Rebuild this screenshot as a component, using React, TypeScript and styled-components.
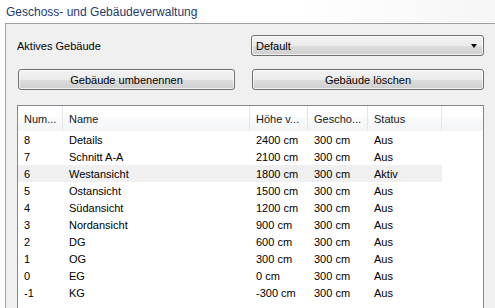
import React from 'react';
import styled, { createGlobalStyle } from 'styled-components';

const GlobalStyle = createGlobalStyle`
  html, body {
    margin: 0;
    padding: 0;
    background: #ffffff;
    overflow: hidden;
  }
  body {
    font-family: "Liberation Sans", Arial, sans-serif;
    font-size: 11px;
    color: #000000;
  }
`;

const Window = styled.div`
  width: 495px;
  height: 308px;
  overflow: hidden;
  display: flex;
  flex-direction: column;
  background: linear-gradient(90deg, #ffffff 0%, #ffffff 60%, #f6f6f6 100%);
`;

const TitleBar = styled.div`
  height: 23px;
  flex: none;
  display: flex;
  align-items: center;
  padding-left: 6px;
  font-size: 12px;
  color: #1e3a6e;
`;

// panel continues past the right and bottom edge of the frame
const Panel = styled.div`
  flex: 1;
  min-height: 0;
  margin-left: 5px;
  width: 510px;
  display: flex;
  background: #f0f0f0;
  border-top: 1px solid #a0a0a0;
  border-left: 1px solid #a0a0a0;
  padding: 11px 0 0 11px;
  box-sizing: border-box;
`;

const Content = styled.div`
  width: 467px;
  display: flex;
  flex-direction: column;
`;

const ControlGrid = styled.div`
  display: grid;
  grid-template-columns: 219px 1fr;
  column-gap: 15px;
  row-gap: 13px;
  align-items: center;
`;

const Label = styled.div`
  color: #000000;
`;

const winGradient = `linear-gradient(180deg, #f2f2f2 0%, #ebebeb 50%, #dddddd 51%, #cfcfcf 100%)`;

const Select = styled.div`
  height: 21px;
  box-sizing: border-box;
  border: 1px solid #707070;
  border-radius: 3px;
  background: ${winGradient};
  box-shadow: inset 0 0 0 1px rgba(255, 255, 255, 0.7);
  display: flex;
  align-items: center;
  justify-content: space-between;
  padding: 0 3px 0 4px;
`;

const Arrow = styled.span`
  width: 0;
  height: 0;
  border-left: 3.5px solid transparent;
  border-right: 3.5px solid transparent;
  border-top: 4px solid #000000;
  margin-right: 3px;
`;

const Button = styled.button<{ inset?: number }>`
  height: 21px;
  box-sizing: border-box;
  margin: 0 ${p => p.inset ?? 1}px 0 1px;
  border: 1px solid #707070;
  border-radius: 3px;
  background: ${winGradient};
  box-shadow: inset 0 0 0 1px rgba(255, 255, 255, 0.7);
  font-family: "Liberation Sans", Arial, sans-serif;
  font-size: 11px;
  color: #000000;
  padding: 0;
`;

const ListView = styled.div`
  margin-top: 15px;
  flex: 1;
  min-height: 0;
  background: #ffffff;
  border: 1px solid #828790;
  border-bottom: none;
  overflow: hidden;
`;

const HeaderRow = styled.div`
  display: grid;
  grid-template-columns: 45px 187px 58px 60px 74px 1fr;
  height: 25px;
  background: linear-gradient(180deg, #ffffff 0%, #ffffff 45%, #f9fafb 46%, #f4f5f7 100%);
`;

const HeaderCell = styled.div<{ last?: boolean }>`
  display: flex;
  align-items: center;
  padding-left: 6px;
  border-right: ${p => (p.last ? 'none' : '1px solid #e3e5e8')};
  color: #1a1a1a;
`;

const Row = styled.div<{ selected?: boolean }>`
  display: grid;
  grid-template-columns: 45px 187px 58px 60px 74px;
  width: 424px;
  height: 17px;
  align-items: center;
  background: ${p => (p.selected ? '#f0f0f0' : 'transparent')};
`;

const Cell = styled.div`
  padding-left: 6px;
  white-space: nowrap;
`;

const columns = ['Num...', 'Name', 'Höhe v...', 'Gescho...', 'Status'];

const floors = [
  { num: '8', name: 'Details', height: '2400 cm', storey: '300 cm', status: 'Aus' },
  { num: '7', name: 'Schnitt A-A', height: '2100 cm', storey: '300 cm', status: 'Aus' },
  { num: '6', name: 'Westansicht', height: '1800 cm', storey: '300 cm', status: 'Aktiv' },
  { num: '5', name: 'Ostansicht', height: '1500 cm', storey: '300 cm', status: 'Aus' },
  { num: '4', name: 'Südansicht', height: '1200 cm', storey: '300 cm', status: 'Aus' },
  { num: '3', name: 'Nordansicht', height: '900 cm', storey: '300 cm', status: 'Aus' },
  { num: '2', name: 'DG', height: '600 cm', storey: '300 cm', status: 'Aus' },
  { num: '1', name: 'OG', height: '300 cm', storey: '300 cm', status: 'Aus' },
  { num: '0', name: 'EG', height: '0 cm', storey: '300 cm', status: 'Aus' },
  { num: '-1', name: 'KG', height: '-300 cm', storey: '300 cm', status: 'Aus' },
];

const App: React.FC = () => {
  return (
    <>
      <GlobalStyle />
      <Window>
        <TitleBar>Geschoss- und Gebäudeverwaltung</TitleBar>
        <Panel>
          <Content>
            <ControlGrid>
              <Label>Aktives Gebäude</Label>
              <Select>
                <span>Default</span>
                <Arrow />
              </Select>
              <Button>Gebäude umbenennen</Button>
              <Button inset={0}>Gebäude löschen</Button>
            </ControlGrid>
            <ListView>
              <HeaderRow>
                {columns.map(c => (
                  <HeaderCell key={c}>{c}</HeaderCell>
                ))}
                <HeaderCell last />
              </HeaderRow>
              {floors.map(f => (
                <Row key={f.num} selected={f.status === 'Aktiv'}>
                  <Cell>{f.num}</Cell>
                  <Cell>{f.name}</Cell>
                  <Cell>{f.height}</Cell>
                  <Cell>{f.storey}</Cell>
                  <Cell>{f.status}</Cell>
                </Row>
              ))}
            </ListView>
          </Content>
        </Panel>
      </Window>
    </>
  );
};

export default App;
